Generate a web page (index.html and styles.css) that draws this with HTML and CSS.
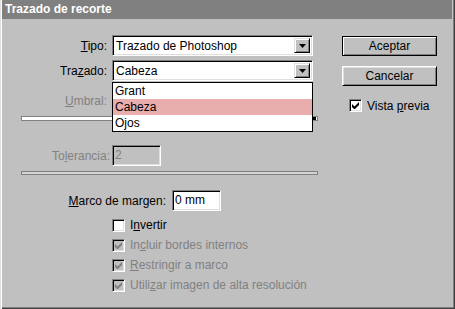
FILE: index.html
```html
<!DOCTYPE html>
<html lang="es">
<head>
    <meta charset="UTF-8">
    <title>Trazado de recorte</title>
    <link rel="stylesheet" href="styles.css">
</head>
<body>
    <div class="window">
        <div class="titlebar">Trazado de recorte</div>
        <div class="content">
            <div class="main">
                <div class="row">
                    <span class="label"><u>T</u>ipo:</span>
                    <div class="combo">
                        <span class="combo-text">Trazado de Photoshop</span>
                        <span class="combo-btn"><svg width="7" height="4" viewBox="0 0 7 4"><path d="M0 0h7L3.5 4z" fill="#000"/></svg></span>
                    </div>
                </div>
                <div class="row row-gap">
                    <span class="label">Tra<u>z</u>ado:</span>
                    <div class="combo-wrap">
                        <div class="combo">
                            <span class="combo-text">Cabeza</span>
                            <span class="combo-btn"><svg width="7" height="4" viewBox="0 0 7 4"><path d="M0 0h7L3.5 4z" fill="#000"/></svg></span>
                        </div>
                        <ul class="droplist">
                            <li>Grant</li>
                            <li class="selected">Cabeza</li>
                            <li>Ojos</li>
                        </ul>
                    </div>
                </div>
                <div class="row row-umbral">
                    <span class="label disabled"><u>U</u>mbral:</span>
                    <div class="field field-disabled"></div>
                </div>
                <div class="slider"><span class="slider-end"></span></div>
                <div class="row row-tol">
                    <span class="label label-tol disabled">To<u>l</u>erancia:</span>
                    <div class="field field-disabled">2</div>
                </div>
                <div class="groove"></div>
                <div class="row row-marco">
                    <span class="label label-wide"><u>M</u>arco de margen:</span>
                    <div class="field">0 mm</div>
                </div>
                <div class="checks">
                    <div class="check">
                        <span class="box"></span>
                        <span>I<u>n</u>vertir</span>
                    </div>
                    <div class="check disabled">
                        <span class="box box-disabled"><svg width="7" height="7" viewBox="0 0 7 7"><path d="M0 2v3l2 2h1l4-4V0L2.5 4.5z" fill="#808080"/></svg></span>
                        <span>In<u>c</u>luir bordes internos</span>
                    </div>
                    <div class="check disabled">
                        <span class="box box-disabled"><svg width="7" height="7" viewBox="0 0 7 7"><path d="M0 2v3l2 2h1l4-4V0L2.5 4.5z" fill="#808080"/></svg></span>
                        <span><u>R</u>estringir a marco</span>
                    </div>
                    <div class="check disabled">
                        <span class="box box-disabled"><svg width="7" height="7" viewBox="0 0 7 7"><path d="M0 2v3l2 2h1l4-4V0L2.5 4.5z" fill="#808080"/></svg></span>
                        <span>Utili<u>z</u>ar imagen de alta resolución</span>
                    </div>
                </div>
            </div>
            <div class="side">
                <button class="btn btn-default">Aceptar</button>
                <button class="btn">Cancelar</button>
                <div class="check check-preview">
                    <span class="box"><svg width="7" height="7" viewBox="0 0 7 7"><path d="M0 2v3l2 2h1l4-4V0L2.5 4.5z" fill="#000"/></svg></span>
                    <span>Vista <u>p</u>revia</span>
                </div>
            </div>
        </div>
    </div>
</body>
</html>
```

FILE: styles.css
```css
body {
    margin: 0;
    background-color: #c0c0c0;
    font-family: 'Liberation Sans', Arial, sans-serif;
    font-size: 12px;
    color: #000;
}

.window {
    position: relative;
    width: 455px;
    height: 309px;
    box-sizing: border-box;
    background-color: #c0c0c0;
    /* classic raised window frame */
    box-shadow: inset 1px 0 #dfdfdf, inset 2px 0 #fff,
                inset -1px -1px #404040, inset -2px -2px #808080;
}

.titlebar {
    margin: 0 3px 0 2px;
    height: 19px;
    line-height: 19px;
    padding-left: 3px;
    background-color: #808080;
    color: #fff;
    font-weight: bold;
}

.content {
    display: flex;
    padding-top: 16px;
}

.main {
    margin-left: 21px;
    width: 297px;
}

.row {
    display: flex;
    align-items: center;
    height: 21px;
}

.row-gap { margin-top: 4px; }
.row-umbral { margin-top: 9px; }
.row-tol { margin-top: 24px; }
.row-marco { margin-top: 15px; }

.label {
    width: 86px;
    margin-right: 5px;
    text-align: right;
    white-space: nowrap;
}

.label-tol {
    width: 89px;
    margin-right: 2px;
}

.label-wide {
    width: 145px;
    margin-right: 6px;
}

.disabled {
    color: #808080;
}

/* sunken edit / combo frame */
.combo,
.field {
    box-sizing: border-box;
    height: 21px;
    background-color: #fff;
    border: 1px solid;
    border-color: #808080 #fff #fff #808080;
    box-shadow: inset 1px 1px #000, inset -1px -1px #dfdfdf;
}

.combo {
    display: flex;
    align-items: center;
    width: 201px;
    padding: 0 2px 0 3px;
}

.combo-text {
    flex: 1;
}

.combo-btn {
    display: flex;
    align-items: center;
    justify-content: center;
    width: 16px;
    height: 15px;
    box-sizing: border-box;
    background-color: #c0c0c0;
    border: 1px solid;
    border-color: #dfdfdf #000 #000 #dfdfdf;
    box-shadow: inset 1px 1px #fff, inset -1px -1px #808080;
}

.combo-wrap {
    position: relative;
}

.droplist {
    position: absolute;
    top: 22px;
    left: 0;
    width: 201px;
    box-sizing: border-box;
    margin: 0;
    padding: 0;
    list-style: none;
    background-color: #fff;
    border: 1px solid #000;
    z-index: 2;
}

.droplist li {
    height: 16px;
    line-height: 16px;
    padding-left: 2px;
}

.droplist .selected {
    background-color: #e8adad;
}

.field {
    width: 49px;
    padding-left: 2px;
    line-height: 19px;
}

.field-disabled {
    background-color: #c0c0c0;
    color: #808080;
}

.slider {
    position: relative;
    margin-top: 5px;
    height: 5px;
    box-sizing: border-box;
    border: 1px solid #808080;
    background-color: #fff;
}

.slider-end {
    position: absolute;
    right: 1px;
    top: 0;
    width: 5px;
    height: 3px;
    background-color: #000;
}

.groove {
    margin-top: 5px;
    height: 4px;
    box-sizing: border-box;
    border: 1px solid #808080;
    background-color: #d4d4d4;
}

.checks {
    margin-top: 4px;
    padding-left: 91px;
}

.check {
    display: flex;
    align-items: center;
    height: 20px;
    white-space: nowrap;
}

.box {
    display: flex;
    align-items: center;
    justify-content: center;
    width: 13px;
    height: 13px;
    box-sizing: border-box;
    margin-right: 5px;
    background-color: #fff;
    border: 1px solid;
    border-color: #808080 #fff #fff #808080;
    box-shadow: inset 1px 1px #000, inset -1px -1px #dfdfdf;
}

.box-disabled {
    background-color: #c0c0c0;
}

.side {
    display: flex;
    flex-direction: column;
    margin-left: 24px;
    margin-top: 1px;
}

.btn {
    width: 95px;
    height: 20px;
    padding: 0;
    font-family: inherit;
    font-size: 12px;
    color: #000;
    background-color: #c0c0c0;
    border: 1px solid;
    border-color: #fff #000 #000 #fff;
    box-shadow: inset 1px 1px #dfdfdf, inset -1px -1px #808080;
}

.btn + .btn {
    margin-top: 10px;
}

.btn-default {
    border-color: #000;
    box-shadow: inset 1px 1px #fff, inset -1px -1px #808080;
}

.check-preview {
    height: 13px;
    margin-top: 13px;
    margin-left: 7px;
}
```
